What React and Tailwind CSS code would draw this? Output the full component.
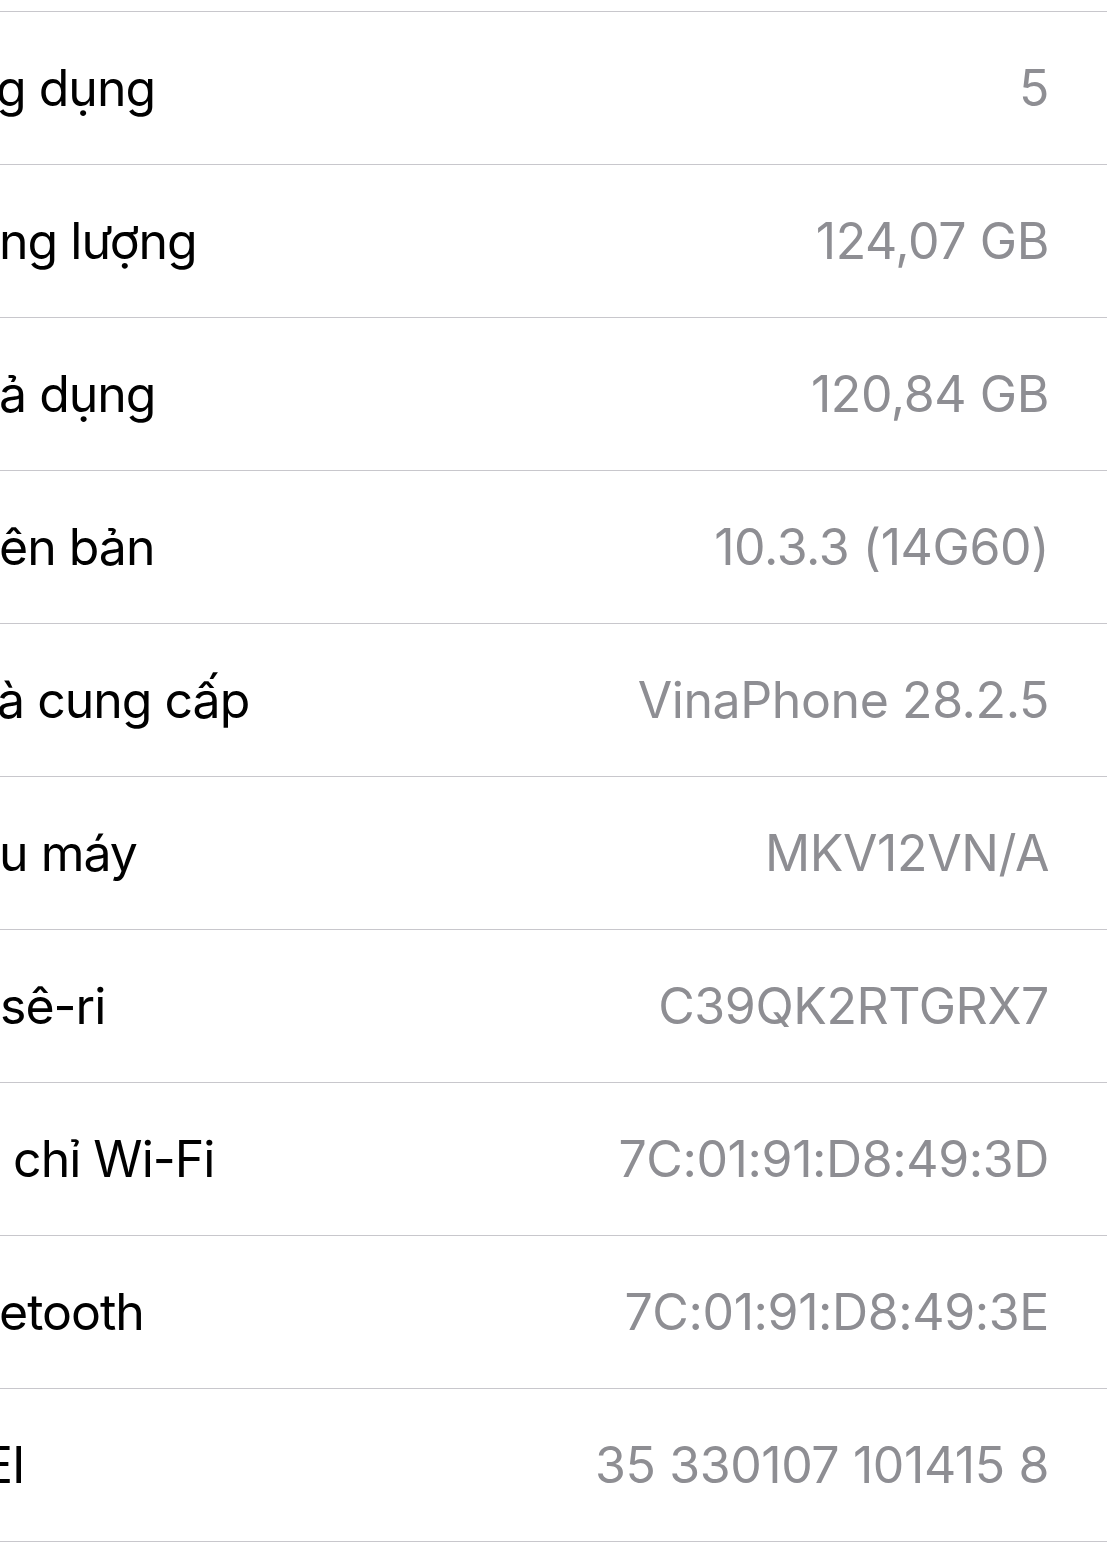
import React from "react";

const rows = [
  ["g dụng", "5", "-ml-[4px]"],
  ["ng lượng", "124,07 GB", "-ml-[1px]"],
  ["ả dụng", "120,84 GB", "-ml-[1px]"],
  ["ên bản", "10.3.3 (14G60)", "-ml-[1px]"],
  ["à cung cấp", "VinaPhone 28.2.5", "-ml-[3px]"],
  ["u máy", "MKV12VN/A", "-ml-[1px]"],
  ["sê-ri", "C39QK2RTGRX7", "ml-0"],
  ["\u00a0chỉ Wi-Fi", "7C:01:91:D8:49:3D", "ml-0"],
  ["etooth", "7C:01:91:D8:49:3E", "-ml-[1px]"],
  ["EI", "35 330107 101415 8", "-ml-[17px]"],
];

export default function App() {
  return (
    <div
      className="w-[1107px] h-[1544px] bg-white overflow-hidden"
      style={{ fontFamily: "Inter, 'Open Sans', 'Liberation Sans', sans-serif" }}
    >
      <div className="mt-[11px] border-t border-[#c8c7cc]">
        {rows.map(([label, value, ml], i) => (
          <div
            key={i}
            className="h-[153px] border-b border-[#c8c7cc] flex items-center justify-between pr-[58px]"
          >
            <span className={`text-[50px] text-black tracking-[-1px] whitespace-nowrap ${ml}`}>
              {label}
            </span>
            <span className="text-[50px] text-[#8e8e93] tracking-[-0.4px] whitespace-nowrap">
              {value}
            </span>
          </div>
        ))}
      </div>
    </div>
  );
}
